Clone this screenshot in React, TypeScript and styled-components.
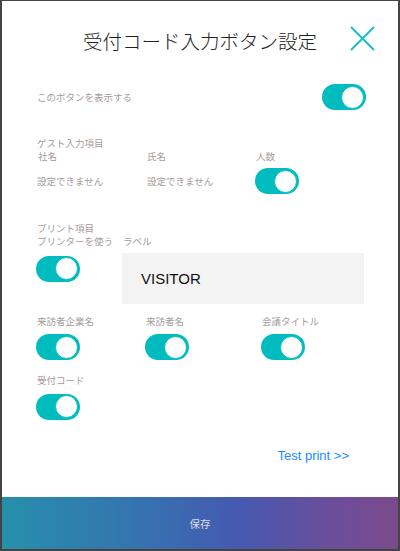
import React, { useState } from "react";
import styled, { createGlobalStyle } from "styled-components";

const GlobalStyle = createGlobalStyle`
  html, body {
    margin: 0;
    padding: 0;
    background: #444;
  }
  * {
    box-sizing: border-box;
  }
`;

const Frame = styled.div`
  width: 400px;
  height: 551px;
  border-style: solid;
  border-color: #444;
  border-width: 1px 2px 2px 2px;
  background: #fff;
  display: flex;
  flex-direction: column;
  font-family: "Noto Sans CJK JP", "Noto Sans", sans-serif;
`;

const Header = styled.header`
  height: 78px;
  display: grid;
  grid-template-columns: 1fr auto 1fr;
  align-items: center;
  padding: 0 23px;

  h1 {
    grid-column: 2;
    margin: 0;
    font-size: 19.5px;
    font-weight: 300;
    color: #222;
  }
`;

const CloseButton = styled.button`
  grid-column: 3;
  justify-self: end;
  margin-top: -4px;
  width: 25px;
  height: 25px;
  padding: 0;
  border: none;
  background: none;
  cursor: pointer;
  svg {
    display: block;
  }
`;

const Main = styled.main`
  flex: 1;
  padding: 5px 32px 0 34px;
  display: flex;
  flex-direction: column;
`;

const Label = styled.div<{ $indent?: number }>`
  font-size: 9.5px;
  line-height: 13px;
  color: #a69b9b;
  white-space: nowrap;
  padding-left: ${(p) => p.$indent ?? 1}px;
`;

const Row = styled.div`
  display: flex;
  justify-content: space-between;
  align-items: center;
`;

const Section = styled.section<{ $top: number }>`
  margin-top: ${(p) => p.$top}px;
`;

const Grid = styled.div<{ $cols: string; $gap?: number; $top?: number }>`
  display: grid;
  grid-template-columns: ${(p) => p.$cols};
  align-items: center;
  row-gap: ${(p) => p.$gap ?? 0}px;
  margin-top: ${(p) => p.$top ?? 0}px;
`;

const Cell = styled.div`
  display: flex;
  flex-direction: column;
  align-items: flex-start;
  gap: 6.5px;
`;

const Track = styled.button<{ $on: boolean }>`
  width: 44px;
  height: 26px;
  border-radius: 13px;
  border: none;
  padding: 2px;
  background: ${(p) => (p.$on ? "#00bcbe" : "#ddd")};
  display: flex;
  justify-content: ${(p) => (p.$on ? "flex-end" : "flex-start")};
  align-items: center;
  cursor: pointer;
  flex-shrink: 0;
`;

const Knob = styled.span`
  width: 23px;
  height: 23px;
  border-radius: 50%;
  background: #fff;
  border: 1.5px solid #00bcbe;
`;

const PrintRow = styled.div`
  display: flex;
`;

const PrintLeft = styled.div`
  width: 86px;
  display: flex;
  flex-direction: column;
  gap: 7.5px;
`;

const PrintRight = styled.div`
  flex: 1;
  display: flex;
  flex-direction: column;
  gap: 4.5px;
  padding-right: 2px;
`;

const LabelBox = styled.div`
  height: 51px;
  background: #f3f3f3;
  display: flex;
  align-items: center;
  padding-left: 19px;
  font-family: "Liberation Sans", Arial, sans-serif;
  font-size: 15px;
  color: #111;
`;

const TestLink = styled.a`
  align-self: flex-end;
  margin-top: 28px;
  margin-right: 17px;
  font-family: "Liberation Sans", Arial, sans-serif;
  font-size: 13px;
  color: #1a8cff;
  text-decoration: none;
  cursor: pointer;
`;

const SaveBar = styled.button`
  height: 52px;
  width: 100%;
  border: none;
  background: linear-gradient(
    90deg,
    #2690ab 0%,
    #3672b0 35%,
    #4559b0 60%,
    #6a4e9c 82%,
    #7b4a8d 100%
  );
  color: #dcdcea;
  font-family: "Noto Sans CJK JP", sans-serif;
  font-size: 10.5px;
  cursor: pointer;
`;

const Toggle: React.FC<{ initial?: boolean }> = ({ initial = true }) => {
  const [on, setOn] = useState(initial);
  return (
    <Track $on={on} onClick={() => setOn(!on)}>
      <Knob />
    </Track>
  );
};

const App: React.FC = () => {
  return (
    <Frame>
      <GlobalStyle />
      <Header>
        <h1>受付コード入力ボタン設定</h1>
        <CloseButton aria-label="close">
          <svg width="25" height="25" viewBox="0 0 25 25">
            <path d="M1 1 L24 24 M24 1 L1 24" stroke="#18c0c4" strokeWidth="2" fill="none" />
          </svg>
        </CloseButton>
      </Header>
      <Main>
        <Row>
          <Label>このボタンを表示する</Label>
          <Toggle />
        </Row>

        <Section $top={27}>
          <Label>ゲスト入力項目</Label>
          <Grid $cols="110px 109px 1fr">
            <Label $indent={2}>社名</Label>
            <Label>氏名</Label>
            <Label>人数</Label>
          </Grid>
          <Grid $cols="110px 109px 1fr" $top={5}>
            <Label>設定できません</Label>
            <Label>設定できません</Label>
            <Toggle />
          </Grid>
        </Section>

        <Section $top={28}>
          <Label>プリント項目</Label>
          <PrintRow>
            <PrintLeft>
              <Label>プリンターを使う</Label>
              <Toggle />
            </PrintLeft>
            <PrintRight>
              <Label>ラベル</Label>
              <LabelBox>VISITOR</LabelBox>
            </PrintRight>
          </PrintRow>
        </Section>

        <Section $top={11}>
          <Grid $cols="109px 116px 1fr" $gap={14}>
            <Cell>
              <Label>来訪者企業名</Label>
              <Toggle />
            </Cell>
            <Cell>
              <Label>来訪者名</Label>
              <Toggle />
            </Cell>
            <Cell>
              <Label>会議タイトル</Label>
              <Toggle />
            </Cell>
            <Cell>
              <Label>受付コード</Label>
              <Toggle />
            </Cell>
          </Grid>
        </Section>

        <TestLink>Test print &gt;&gt;</TestLink>
      </Main>
      <SaveBar>保存</SaveBar>
    </Frame>
  );
};

export default App;
